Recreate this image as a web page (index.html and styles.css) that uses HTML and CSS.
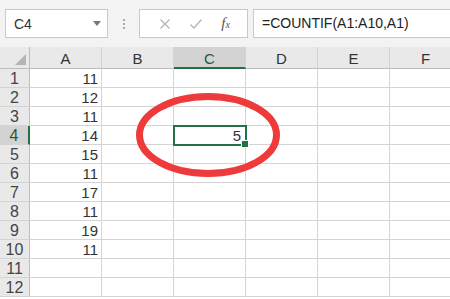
FILE: index.html
```html
<!DOCTYPE html>
<html lang="en">
<head>
    <meta charset="UTF-8">
    <meta name="viewport" content="width=device-width, initial-scale=1.0">
    <title>COUNTIF</title>
    <link rel="stylesheet" href="styles.css">
</head>
<body>
    <div class="app">
        <div class="formula-bar">
            <div class="name-box">
                <span>C4</span>
                <span class="arrow"></span>
            </div>
            <div class="grip"><i></i><i></i><i></i></div>
            <div class="fx-buttons">
                <svg class="btn-icon" width="12" height="12" viewBox="0 0 12 12"><path d="M1.5 1.5 L10.5 10.5 M10.5 1.5 L1.5 10.5" stroke="#b5b5b5" stroke-width="1.3" fill="none"/></svg>
                <svg class="btn-icon" width="14" height="12" viewBox="0 0 14 12"><path d="M1.5 6.5 L5 10 L12.5 1.5" stroke="#b5b5b5" stroke-width="1.3" fill="none"/></svg>
                <span class="fx">f<span class="fx-x">x</span></span>
            </div>
            <div class="formula-input">=COUNTIF(A1:A10,A1)</div>
        </div>

        <div class="sheet">
            <div class="grid">
                <div class="corner"><span class="corner-tri"></span></div>
                <div class="col-head">A</div>
                <div class="col-head">B</div>
                <div class="col-head active">C</div>
                <div class="col-head">D</div>
                <div class="col-head">E</div>
                <div class="col-head">F</div>

                <div class="row-head">1</div><div class="cell num">11</div><div class="cell"></div><div class="cell"></div><div class="cell"></div><div class="cell"></div><div class="cell"></div>
                <div class="row-head">2</div><div class="cell num">12</div><div class="cell"></div><div class="cell"></div><div class="cell"></div><div class="cell"></div><div class="cell"></div>
                <div class="row-head">3</div><div class="cell num">11</div><div class="cell"></div><div class="cell"></div><div class="cell"></div><div class="cell"></div><div class="cell"></div>
                <div class="row-head active">4</div><div class="cell num">14</div><div class="cell"></div><div class="cell num selected">5<span class="handle"></span></div><div class="cell"></div><div class="cell"></div><div class="cell"></div>
                <div class="row-head">5</div><div class="cell num">15</div><div class="cell"></div><div class="cell"></div><div class="cell"></div><div class="cell"></div><div class="cell"></div>
                <div class="row-head">6</div><div class="cell num">11</div><div class="cell"></div><div class="cell"></div><div class="cell"></div><div class="cell"></div><div class="cell"></div>
                <div class="row-head">7</div><div class="cell num">17</div><div class="cell"></div><div class="cell"></div><div class="cell"></div><div class="cell"></div><div class="cell"></div>
                <div class="row-head">8</div><div class="cell num">11</div><div class="cell"></div><div class="cell"></div><div class="cell"></div><div class="cell"></div><div class="cell"></div>
                <div class="row-head">9</div><div class="cell num">19</div><div class="cell"></div><div class="cell"></div><div class="cell"></div><div class="cell"></div><div class="cell"></div>
                <div class="row-head">10</div><div class="cell num">11</div><div class="cell"></div><div class="cell"></div><div class="cell"></div><div class="cell"></div><div class="cell"></div>
                <div class="row-head">11</div><div class="cell"></div><div class="cell"></div><div class="cell"></div><div class="cell"></div><div class="cell"></div><div class="cell"></div>
                <div class="row-head">12</div><div class="cell"></div><div class="cell"></div><div class="cell"></div><div class="cell"></div><div class="cell"></div><div class="cell"></div>
            </div>

            <!-- hand drawn mark around the result -->
            <svg class="mark" width="150" height="90" viewBox="0 0 150 90">
                <ellipse cx="72" cy="42" rx="68.5" ry="38.5" fill="none" stroke="#ee3a3a" stroke-width="7"/>
            </svg>
        </div>
    </div>
</body>
</html>
```

FILE: styles.css
```css
body {
    margin: 0;
    font-family: "Liberation Sans", Arial, sans-serif;
    background-color: #ffffff;
}
.app {
    width: 450px;
    height: 299px;
    overflow: hidden;
}
.formula-bar {
    display: flex;
    align-items: center;
    height: 47px;
    padding-left: 5px;
    background-color: #f3f3f3;
    box-sizing: border-box;
}
.name-box {
    display: flex;
    align-items: center;
    justify-content: space-between;
    width: 103px;
    height: 29px;
    padding: 0 6px 0 8px;
    background-color: white;
    border: 1px solid #c9c9c9;
    box-sizing: border-box;
    font-size: 14px;
    color: #333;
}
.arrow {
    width: 0;
    height: 0;
    border-left: 4px solid transparent;
    border-right: 4px solid transparent;
    border-top: 5px solid #777;
}
.grip {
    display: flex;
    flex-direction: column;
    gap: 2px;
    width: 31px;
    align-items: center;
}
.grip i {
    width: 2px;
    height: 2px;
    background-color: #a9a9a9;
}
.fx-buttons {
    display: flex;
    align-items: center;
    justify-content: space-around;
    width: 109px;
    height: 29px;
    padding: 0 8px 0 10px;
    background-color: white;
    border: 1px solid #c9c9c9;
    box-sizing: border-box;
}
.fx {
    font-family: "Liberation Serif", serif;
    font-style: italic;
    font-size: 15px;
    color: #555;
}
.fx-x {
    font-size: 10px;
}
.formula-input {
    flex: 1;
    height: 29px;
    margin-left: 5px;
    padding-left: 8px;
    line-height: 27px;
    background-color: white;
    border: 1px solid #c9c9c9;
    border-right: none;
    box-sizing: border-box;
    font-size: 14px;
    color: #222;
    white-space: nowrap;
}
.sheet {
    position: relative;
}
.grid {
    display: grid;
    grid-template-columns: 30px 72px 72px 72px 72px 72px 72px;
    grid-template-rows: 22px repeat(12, 19px);
    font-size: 15px;
    color: #333;
}
.grid > div {
    box-sizing: border-box;
    border-right: 1px solid #d4d4d4;
    border-bottom: 1px solid #d4d4d4;
}
.corner {
    position: relative;
    background-color: #e9e9e9;
    border-right-color: #bdbdbd !important;
    border-bottom-color: #bdbdbd !important;
}
.corner-tri {
    position: absolute;
    right: 3px;
    bottom: 3px;
    width: 0;
    height: 0;
    border-left: 11px solid transparent;
    border-bottom: 11px solid #b4b4b4;
}
.col-head {
    background-color: #e9e9e9;
    border-bottom-color: #bdbdbd !important;
    text-align: center;
    font-size: 15px;
    line-height: 24px;
    color: #333;
}
.col-head.active {
    background-color: #d3d3d3;
    border-bottom: 2px solid #217346 !important;
    color: #1e5c3a;
}
.row-head {
    background-color: #e9e9e9;
    border-right-color: #bdbdbd !important;
    text-align: center;
    font-size: 16px;
    line-height: 19px;
    color: #444;
}
.row-head.active {
    background-color: #d3d3d3;
    border-right: 2px solid #217346 !important;
    color: #1e5c3a;
}
.cell {
    line-height: 19px;
}
.num {
    text-align: right;
    padding-right: 3px;
}
.selected {
    position: relative;
    outline: 2px solid #217346;
    outline-offset: -1px;
    padding-right: 4px;
}
.handle {
    position: absolute;
    right: -4px;
    bottom: -4px;
    width: 6px;
    height: 6px;
    background-color: #217346;
    border: 1px solid white;
}
.mark {
    position: absolute;
    left: 136px;
    top: 46px;
}
```
